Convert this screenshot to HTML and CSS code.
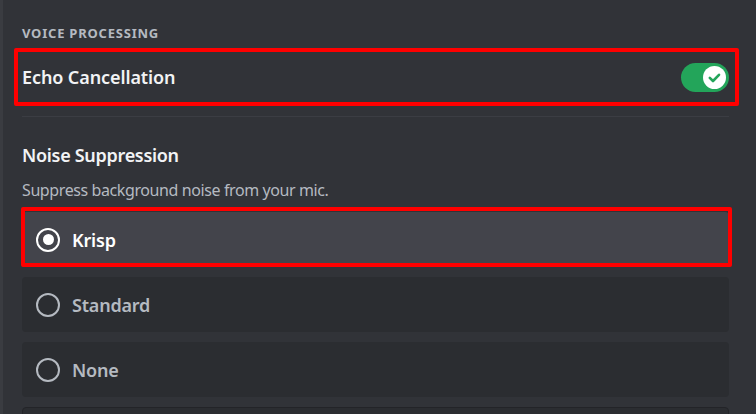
FILE: index.html
```html
<!DOCTYPE html>
<html lang="en">
<head>
  <meta charset="UTF-8" />
  <title>Voice Processing</title>
  <link rel="stylesheet" href="styles.css">
</head>
<body>
  <div class="page">
    <h5 class="section-title">Voice Processing</h5>

    <div class="switch-row">
      <span class="switch-label">Echo Cancellation</span>
      <div class="toggle">
        <svg class="knob" width="23" height="23" viewBox="0 0 23 23">
          <circle cx="11.5" cy="11.5" r="11.5" fill="#fff" />
          <path d="M6.8 11.8l3.2 3.2 6-6.2" fill="none" stroke="#23a55a" stroke-width="2.6" stroke-linecap="round" stroke-linejoin="round" />
        </svg>
      </div>
      <div class="mark"></div>
    </div>

    <div class="divider"></div>

    <h3 class="field-title">Noise Suppression</h3>
    <p class="field-desc">Suppress background noise from your mic.</p>

    <div class="options">
      <div class="option selected">
        <span class="radio"></span>
        <span class="option-label">Krisp</span>
        <div class="mark mark-option"></div>
      </div>
      <div class="option">
        <span class="radio"></span>
        <span class="option-label">Standard</span>
      </div>
      <div class="option">
        <span class="radio"></span>
        <span class="option-label">None</span>
      </div>
      <div class="option option-next"></div>
    </div>
  </div>
</body>
</html>
```

FILE: styles.css
```css
body {
  margin: 0;
  background: #313338;
  font-family: 'Noto Sans', sans-serif;
  color: #f2f3f5;
  overflow: hidden;
}
.page {
  height: 100vh;
  box-sizing: border-box;
  padding: 25px 27px 0 19px;
  border-left: 3px solid #3a3c41;
  overflow: hidden;
}
.section-title {
  margin: 0;
  font-size: 13px;
  line-height: 16px;
  font-weight: 700;
  text-transform: uppercase;
  letter-spacing: 0.06em;
  color: #b5bac1;
}
.switch-row {
  position: relative;
  margin-top: 7px;
  height: 58px;
  display: flex;
  align-items: center;
  justify-content: space-between;
}
.switch-label {
  font-size: 18px;
  font-weight: 600;
  letter-spacing: -0.1px;
  color: #f2f3f5;
}
.toggle {
  width: 48px;
  height: 29px;
  border-radius: 15px;
  background: #23a55a;
  display: flex;
  align-items: center;
  justify-content: flex-end;
  padding-right: 3px;
  box-sizing: border-box;
}
.knob { display: block; }
.mark {
  position: absolute;
  left: -8px;
  right: -10px;
  top: 0;
  bottom: 0;
  border: 4px solid #ff0000;
  border-radius: 2px;
}
.divider {
  margin-top: 10px;
  height: 1px;
  background: #3b3d43;
}
.field-title {
  margin: 27px 0 0;
  font-size: 18px;
  line-height: 22px;
  font-weight: 600;
  letter-spacing: -0.3px;
  color: #f2f3f5;
}
.field-desc {
  margin: 14px 0 0;
  font-size: 16px;
  line-height: 20px;
  letter-spacing: -0.4px;
  color: #b5bac1;
}
.options {
  margin-top: 12px;
  display: flex;
  flex-direction: column;
  gap: 10px;
}
.option {
  position: relative;
  flex: none;
  height: 55px;
  border-radius: 4px;
  background: #2b2d31;
  display: flex;
  align-items: center;
  gap: 12px;
  padding-left: 14px;
}
.option.selected { background: #43444b; }
.radio {
  width: 24px;
  height: 24px;
  box-sizing: border-box;
  border-radius: 50%;
  border: 2px solid #b5bac1;
  display: flex;
  align-items: center;
  justify-content: center;
}
.option.selected .radio {
  border: 2.5px solid #fff;
}
.option.selected .radio::after {
  content: "";
  width: 11px;
  height: 11px;
  border-radius: 50%;
  background: #fff;
}
.option-label {
  font-size: 18px;
  font-weight: 600;
  letter-spacing: -0.2px;
  color: #b5bac1;
}
.option.selected .option-label { color: #fff; }
.mark-option {
  left: -1px;
  right: -3px;
  top: -5px;
  bottom: 0;
}
.option-next {
  border: 1px solid #232428;
}
```
